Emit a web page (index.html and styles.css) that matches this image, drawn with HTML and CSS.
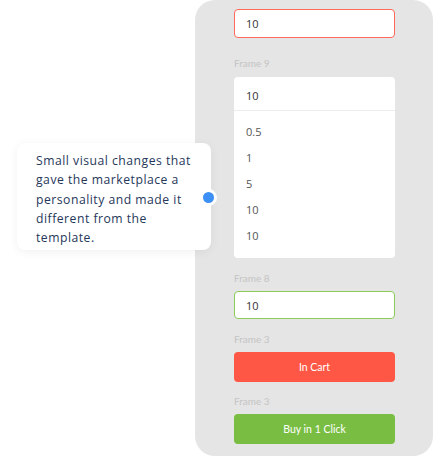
FILE: index.html
```html
<!DOCTYPE html>
<html lang="en">
<head>
  <meta charset="UTF-8" />
  <meta name="viewport" content="width=device-width, initial-scale=1.0"/>
  <title>Marketplace UI details</title>
  <link rel="stylesheet" href="styles.css">
</head>
<body>
  <div class="stage">
    <div class="panel">
      <div class="field field-red">10</div>

      <div class="label label-first">Frame 9</div>
      <div class="field field-open">10</div>
      <ul class="dropdown">
        <li>0.5</li>
        <li>1</li>
        <li>5</li>
        <li>10</li>
        <li>10</li>
      </ul>

      <div class="label">Frame 8</div>
      <div class="field field-green">10</div>

      <div class="label">Frame 3</div>
      <button class="btn btn-red">In Cart</button>

      <div class="label label-last">Frame 3</div>
      <button class="btn btn-green">Buy in 1 Click</button>
    </div>

    <div class="note">
      Small visual changes that gave the marketplace a personality and made it different from the template.
    </div>
    <span class="dot"></span>
  </div>
</body>
</html>
```

FILE: styles.css
```css
body {
  margin: 0;
  padding: 0;
  background-color: #fff;
  font-family: 'Open Sans', sans-serif;
}

.stage {
  position: relative;
  width: 435px;
  height: 457px;
  overflow: hidden;
}

.panel {
  margin-left: 195px;
  width: 238px;
  height: 456px;
  box-sizing: border-box;
  padding: 9px 38px 12px 39px;
  background-color: #e5e5e5;
  border-radius: 20px;
  display: flex;
  flex-direction: column;
}

.label {
  font-family: 'Lato', sans-serif;
  font-size: 10px;
  line-height: 14px;
  color: #c4c4c4;
  margin: 13px 0 6px;
}

.label-first {
  margin: 18px 0 7px;
}

.label-last {
  margin: 12px 0 6px;
}

.field {
  height: 29px;
  box-sizing: border-box;
  padding-left: 12px;
  display: flex;
  align-items: center;
  background-color: #fff;
  border-radius: 4px;
  font-size: 11px;
  color: #333;
}

.field-red {
  border: 1.5px solid #fd6a5a;
  padding-left: 11px;
}

.field-green {
  height: 28px;
  border: 1.5px solid #8acb5a;
  padding-left: 11px;
}

.field-open {
  height: 34px;
  padding-top: 3px;
  border-radius: 4px 4px 0 0;
  border-bottom: 1px solid #ececec;
}

.dropdown {
  list-style: none;
  margin: 0;
  padding: 8px 0 9px 12px;
  background-color: #fff;
  border-radius: 0 0 4px 4px;
}

.dropdown li {
  height: 26px;
  line-height: 26px;
  font-size: 11px;
  color: #555;
}

.btn {
  height: 30px;
  width: 100%;
  border: none;
  border-radius: 4px;
  color: #fff;
  font-family: 'Lato', sans-serif;
  font-size: 10.5px;
  cursor: pointer;
}

.btn-red {
  background-color: #ff5745;
}

.btn-green {
  background-color: #79be43;
}

.note {
  position: absolute;
  left: 17px;
  top: 143px;
  width: 194px;
  height: 107px;
  box-sizing: border-box;
  padding: 8px 10px 0 19px;
  background-color: #fff;
  border-radius: 8px;
  box-shadow: 0 2px 10px rgba(0, 0, 0, 0.06);
  font-size: 12.2px;
  line-height: 19.3px;
  letter-spacing: 0.5px;
  color: #26375a;
}

.dot {
  position: absolute;
  left: 200px;
  top: 189px;
  width: 11px;
  height: 11px;
  border: 3px solid #fff;
  border-radius: 50%;
  background-color: #3c8ff5;
}
```
